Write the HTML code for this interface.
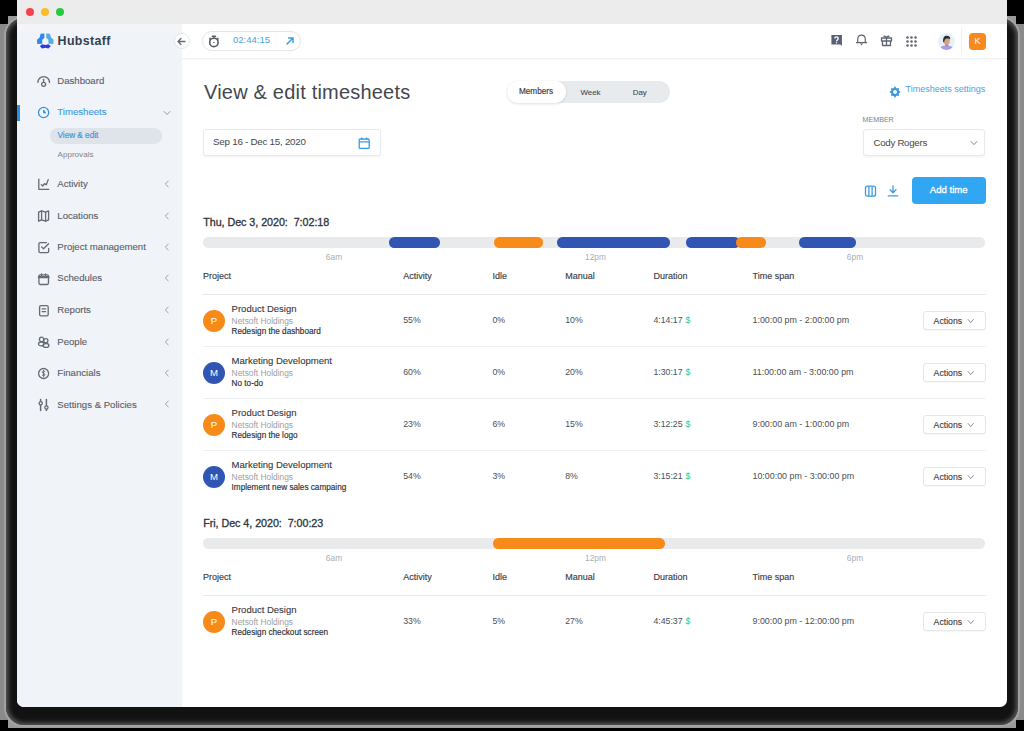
<!DOCTYPE html>
<html><head><meta charset="utf-8">
<style>
*{box-sizing:border-box;margin:0;padding:0}
html,body{width:1024px;height:731px;overflow:hidden;background:#000;font-family:"Liberation Sans",sans-serif;position:relative}
.a{position:absolute}
.t{position:absolute;white-space:nowrap;line-height:1}
#g1{position:absolute;left:0;top:24px;width:1024px;height:696px;background:#8a8a8a}
#g2{position:absolute;left:8px;top:16px;width:1008px;height:712px;background:#9a9a9a}
#sh{position:absolute;left:6px;top:18px;width:1012px;height:707px;border-radius:18px;background:#121212;box-shadow:0 0 1px 1.5px rgba(165,165,165,0.9), inset 0 0 5px 2px rgba(100,100,100,0.95)}
#win{position:absolute;left:17px;top:0;width:990px;height:707px;background:#fff;border-radius:0 0 7px 7px;overflow:hidden}
#title{position:absolute;left:0;top:0;width:990px;height:24px;background:#ececec}
.tl{position:absolute;top:8px;width:8.4px;height:8.4px;border-radius:50%}
#side{position:absolute;left:0;top:24px;width:165px;height:683px;background:linear-gradient(#f3f5f9 0,#f3f5f9 6px,#f0f3f8 10px)}
#hdr{position:absolute;left:165px;top:24px;width:825px;height:35px;background:#fff;border-bottom:1px solid #f1f2f3;box-shadow:0 1px 1px rgba(0,0,0,0.02)}
</style></head><body>
<div id="g1"></div><div id="g2"></div><div id="sh"></div>
<div id="win">
  <div id="title">
    <div class="tl" style="left:8.8px;background:#f8414c"></div>
    <div class="tl" style="left:23.7px;background:#fbbc2a"></div>
    <div class="tl" style="left:38.8px;background:#28c93f"></div>
  </div>
  <div id="side"></div>
  <div id="hdr"></div>
</div>
<svg class="a" style="left:35px;top:33px" width="21" height="17" viewBox="0 0 21 17">
<path d="M5.6 0.8 L9.4 0.6 L9.4 4.8 L7.2 7 L7.2 10.8 L2.2 11 L2 6.8 L4.6 4.6 Z" fill="#2f8ae8"/>
<path d="M15 0.8 L11.2 0.6 L11.2 4.8 L13.4 7 L13.4 10.8 L18.4 11 L18.6 6.8 L16 4.6 Z" fill="#55aee8"/>
<path d="M4.8 13.3 L7.2 11.2 L10.3 12 L13.4 11.2 L15.8 13.3 L13.4 15.5 L10.3 14.7 L7.2 15.5 Z" fill="#2a3ee0"/>
</svg>
<div class="t" style="left:57.60px;top:34.90px;font-size:12.4px;color:#34414f;font-weight:700;letter-spacing:0.35px;">Hubstaff</div>
<div class="t" style="left:57.30px;top:76.07px;font-size:9.6px;color:#5b616b;-webkit-text-stroke:0.12px #5b616b;">Dashboard</div>
<div class="t" style="left:57.30px;top:107.27px;font-size:9.6px;color:#3d9be0;-webkit-text-stroke:0.12px #3d9be0;">Timesheets</div>
<div class="t" style="left:57.30px;top:179.17px;font-size:9.6px;color:#5b616b;-webkit-text-stroke:0.12px #5b616b;">Activity</div>
<div class="t" style="left:57.30px;top:210.67px;font-size:9.6px;color:#5b616b;-webkit-text-stroke:0.12px #5b616b;">Locations</div>
<div class="t" style="left:57.30px;top:242.17px;font-size:9.6px;color:#5b616b;-webkit-text-stroke:0.12px #5b616b;">Project management</div>
<div class="t" style="left:57.30px;top:273.47px;font-size:9.6px;color:#5b616b;-webkit-text-stroke:0.12px #5b616b;">Schedules</div>
<div class="t" style="left:57.30px;top:304.97px;font-size:9.6px;color:#5b616b;-webkit-text-stroke:0.12px #5b616b;">Reports</div>
<div class="t" style="left:57.30px;top:336.67px;font-size:9.6px;color:#5b616b;-webkit-text-stroke:0.12px #5b616b;">People</div>
<div class="t" style="left:57.30px;top:368.17px;font-size:9.6px;color:#5b616b;-webkit-text-stroke:0.12px #5b616b;">Financials</div>
<div class="t" style="left:57.30px;top:399.57px;font-size:9.6px;color:#5b616b;-webkit-text-stroke:0.12px #5b616b;">Settings &amp; Policies</div>
<div class="a" style="left:17px;top:105px;width:3px;height:16px;background:#2f8fe0"></div>
<svg class="a" style="left:164px;top:180.0px" width="6" height="8" viewBox="0 0 6 8"><path d="M4.5 0.8 L1.3 4 L4.5 7.2" fill="none" stroke="#9aa0a8" stroke-width="1"/></svg>
<svg class="a" style="left:164px;top:211.5px" width="6" height="8" viewBox="0 0 6 8"><path d="M4.5 0.8 L1.3 4 L4.5 7.2" fill="none" stroke="#9aa0a8" stroke-width="1"/></svg>
<svg class="a" style="left:164px;top:243.0px" width="6" height="8" viewBox="0 0 6 8"><path d="M4.5 0.8 L1.3 4 L4.5 7.2" fill="none" stroke="#9aa0a8" stroke-width="1"/></svg>
<svg class="a" style="left:164px;top:274.3px" width="6" height="8" viewBox="0 0 6 8"><path d="M4.5 0.8 L1.3 4 L4.5 7.2" fill="none" stroke="#9aa0a8" stroke-width="1"/></svg>
<svg class="a" style="left:164px;top:305.8px" width="6" height="8" viewBox="0 0 6 8"><path d="M4.5 0.8 L1.3 4 L4.5 7.2" fill="none" stroke="#9aa0a8" stroke-width="1"/></svg>
<svg class="a" style="left:164px;top:337.5px" width="6" height="8" viewBox="0 0 6 8"><path d="M4.5 0.8 L1.3 4 L4.5 7.2" fill="none" stroke="#9aa0a8" stroke-width="1"/></svg>
<svg class="a" style="left:164px;top:369.0px" width="6" height="8" viewBox="0 0 6 8"><path d="M4.5 0.8 L1.3 4 L4.5 7.2" fill="none" stroke="#9aa0a8" stroke-width="1"/></svg>
<svg class="a" style="left:164px;top:400.4px" width="6" height="8" viewBox="0 0 6 8"><path d="M4.5 0.8 L1.3 4 L4.5 7.2" fill="none" stroke="#9aa0a8" stroke-width="1"/></svg>
<svg class="a" style="left:163.0px;top:109.5px" width="8" height="6" viewBox="0 0 8 6"><path d="M0.8 1.2 L4.0 4.6 L7.2 1.2" fill="none" stroke="#9aa0a8" stroke-width="1"/></svg>
<div class="a" style="left:50px;top:128px;width:112px;height:16px;background:#dfe3ea;border-radius:8px"></div>
<div class="t" style="left:57.50px;top:131.86px;font-size:8.2px;color:#3d9be0;-webkit-text-stroke:0.2px #3d9be0;">View &amp; edit</div>
<div class="t" style="left:57.50px;top:150.74px;font-size:8.1px;color:#80868f;">Approvals</div>
<svg class="a" style="left:37px;top:75px" width="14" height="13" viewBox="0 0 14 13" fill="none" stroke="#646b75" stroke-width="1.3" stroke-linecap="round" stroke-linejoin="round"><path d="M0.9 7.4 A5.8 5.8 0 0 1 12.5 7.4"/><line x1="6.6" y1="4.3" x2="6.6" y2="7.3"/><circle cx="6.6" cy="9.3" r="2"/></svg>
<svg class="a" style="left:37px;top:106.3px" width="13" height="13" viewBox="0 0 13 13" fill="none" stroke="#3a92d6" stroke-width="1.3" stroke-linejoin="round"><circle cx="6.6" cy="6.5" r="5.1"/><path d="M6.6 4 V6.9 H8.6 Z" fill="#3a92d6" stroke-width="1"/></svg>
<svg class="a" style="left:37px;top:178px" width="13" height="13" viewBox="0 0 13 13" fill="none" stroke="#646b75" stroke-width="1.3" stroke-linecap="round" stroke-linejoin="round"><path d="M1.8 1.2 V11.3 H11.8"/><path d="M4.3 6.6 L5.7 8 L7.5 5.6 L9.3 6.8 L11.2 1.6"/></svg>
<svg class="a" style="left:37px;top:209px" width="13" height="14" viewBox="0 0 13 14" fill="none" stroke="#646b75" stroke-width="1.3" stroke-linecap="round" stroke-linejoin="round"><path d="M1.6 3.2 L4.6 1.9 L8.6 3.2 L11.6 1.9 V10.9 L8.6 12.2 L4.6 10.9 L1.6 12.2 Z"/><path d="M4.6 1.9 V10.9 M8.6 3.2 V12.2"/></svg>
<svg class="a" style="left:37px;top:241px" width="13" height="13" viewBox="0 0 13 13" fill="none" stroke="#646b75" stroke-width="1.3" stroke-linecap="round" stroke-linejoin="round"><path d="M9.4 1.6 H3.2 Q1.9 1.6 1.9 2.9 V10.3 Q1.9 11.6 3.2 11.6 H10.4 Q11.7 11.6 11.7 10.3 V7.4"/><path d="M4.6 5.9 L6.5 7.7 L11.6 2.7"/></svg>
<svg class="a" style="left:37px;top:273px" width="13" height="13" viewBox="0 0 13 13" fill="none" stroke="#646b75" stroke-width="1.3" stroke-linecap="round" stroke-linejoin="round"><rect x="1.9" y="1.9" width="9.6" height="9.6" rx="1.4"/><path d="M1.9 4.2 H11.5" stroke-width="2.2"/><path d="M4.6 1 V2.4 M8.6 1 V2.4"/></svg>
<svg class="a" style="left:37px;top:304px" width="13" height="13" viewBox="0 0 13 13" fill="none" stroke="#646b75" stroke-width="1.3" stroke-linecap="round" stroke-linejoin="round"><rect x="2.6" y="1.6" width="8.6" height="10.2" rx="1.4"/><path d="M5.2 4.9 H8.6 M5.2 7.6 H8.6"/></svg>
<svg class="a" style="left:37px;top:335px" width="13" height="13" viewBox="0 0 13 13" fill="none" stroke="#646b75" stroke-width="1.3" stroke-linecap="round" stroke-linejoin="round"><circle cx="4.6" cy="4.4" r="2.2"/><circle cx="8.8" cy="5.8" r="2.1"/><ellipse cx="4.2" cy="8.9" rx="2.7" ry="1.9"/><ellipse cx="9" cy="10.4" rx="2.9" ry="1.9"/></svg>
<svg class="a" style="left:37px;top:367px" width="13" height="13" viewBox="0 0 13 13" fill="none" stroke="#646b75" stroke-width="1.3" stroke-linecap="round" stroke-linejoin="round"><circle cx="6.6" cy="6.5" r="5"/><path d="M7.9 4.6 C7.5 4 5.3 4 5.3 5.3 C5.3 6.5 8 6.2 8 7.6 C8 8.9 5.6 8.8 5.2 8.2 M6.6 3.4 V9.6" stroke-width="1"/></svg>
<svg class="a" style="left:37px;top:398px" width="13" height="14" viewBox="0 0 13 14" fill="none" stroke="#646b75" stroke-width="1.3" stroke-linecap="round" stroke-linejoin="round"><path d="M3.6 1.6 V12.6 M9.4 1.6 V12.6" stroke-width="1.5"/><circle cx="3.7" cy="5.3" r="1.6" fill="#f0f3f8"/><circle cx="9.4" cy="9.5" r="1.6" fill="#f0f3f8"/></svg>
<div class="a" style="left:173.5px;top:33px;width:16px;height:16px;background:#fff;border:1px solid #e4e7eb;border-radius:50%"></div>
<svg class="a" style="left:176px;top:36px" width="11" height="11" viewBox="0 0 11 11" fill="none" stroke="#646a72" stroke-width="1.3" stroke-linecap="round" stroke-linejoin="round"><path d="M9 5.5 H2.2 M5 2.5 L2 5.5 L5 8.5"/></svg>
<div class="a" style="left:202px;top:31px;width:99px;height:20px;background:#fff;border:1px solid #e2e5e9;border-radius:10px"></div>
<svg class="a" style="left:207px;top:34px" width="14" height="14" viewBox="0 0 14 14" fill="none" stroke="#585e66" stroke-width="1.6" stroke-linecap="round"><circle cx="6.9" cy="8.4" r="4.2"/><path d="M5.3 2.2 H8.6 M6.9 2.4 V4" stroke-width="1.4"/><path d="M2.6 5 L3.4 4.2 M11.2 5 L10.4 4.2" stroke-width="1.2"/><circle cx="6.9" cy="8.4" r="0.7" fill="#585e66" stroke="none"/></svg>
<div class="t" style="left:233.00px;top:35.26px;font-size:9.5px;color:#4aa3df;">02:44:15</div>
<svg class="a" style="left:285px;top:36px" width="10" height="10" viewBox="0 0 10 10" fill="none" stroke="#3d9be0" stroke-width="1.5" stroke-linecap="round"><path d="M2 8 L8 2 M3.6 2 H8 V6.4"/></svg>
<svg class="a" style="left:831px;top:35px" width="12" height="12" viewBox="0 0 12 12"><path d="M0.4 0.1 H10.9 V10.9 L9.4 9.4 H0.4 Z" fill="#566075"/><path d="M3.8 3.6 Q3.8 1.9 5.5 1.9 Q7.2 1.9 7.2 3.5 Q7.2 4.5 6.2 5.1 Q5.5 5.5 5.5 6.3" fill="none" stroke="#fff" stroke-width="1.3"/><circle cx="5.5" cy="7.7" r="0.75" fill="#fff"/></svg>
<svg class="a" style="left:855px;top:34px" width="13" height="13" viewBox="0 0 13 13" fill="none" stroke="#60666f" stroke-width="1.2"><path d="M2.7 8.6 V5.4 Q2.7 1.2 6.5 1.2 Q10.3 1.2 10.3 5.4 V8.6"/><path d="M1 8.6 H12" stroke-width="1.3"/><path d="M4.9 9.5 H8.1 L6.5 11.6 Z" fill="#60666f" stroke="none"/></svg>
<svg class="a" style="left:880px;top:34px" width="13" height="13" viewBox="0 0 13 13" fill="none" stroke="#5f6673" stroke-width="1.3" stroke-linejoin="round"><rect x="1.5" y="4" width="10" height="3"/><path d="M2.5 7 V11.5 H10.5 V7 M6.5 4 V11.5"/><path d="M6.5 4 C5.5 2 4 1.6 4 3 M6.5 4 C7.5 2 9 1.6 9 3"/></svg>
<svg class="a" style="left:905.5px;top:35.5px" width="11" height="11" viewBox="0 0 11 11" fill="#5f6673"><circle cx="1.5" cy="1.5" r="1.3"/><circle cx="1.5" cy="5.5" r="1.3"/><circle cx="1.5" cy="9.5" r="1.3"/><circle cx="5.5" cy="1.5" r="1.3"/><circle cx="5.5" cy="5.5" r="1.3"/><circle cx="5.5" cy="9.5" r="1.3"/><circle cx="9.5" cy="1.5" r="1.3"/><circle cx="9.5" cy="5.5" r="1.3"/><circle cx="9.5" cy="9.5" r="1.3"/></svg>
<svg class="a" style="left:937.5px;top:33px" width="17" height="17" viewBox="0 0 17 17"><defs><clipPath id="cav"><circle cx="8.5" cy="8.5" r="8.5"/></clipPath></defs>
<g clip-path="url(#cav)"><rect width="17" height="17" fill="#e6f0f8"/>
<path d="M1.5 17 C2.5 13 5.5 12.6 8.6 12.6 C11.6 12.6 14.5 13 15.5 17 Z" fill="#ad9be6"/>
<rect x="7.2" y="10.6" width="3" height="2.6" fill="#b88a70"/>
<ellipse cx="8.7" cy="8" rx="3.1" ry="3.7" fill="#d0a68a"/>
<path d="M5.3 9.2 C4.6 4.6 6.4 2.8 8.8 2.8 C11.2 2.8 12.6 4.2 12.2 6.6 C11.4 5.6 10.2 5.4 8.6 5.6 C7.2 5.8 6.4 6.6 6.2 9.6 Z" fill="#2e2a2c"/></g></svg>
<div class="a" style="left:961px;top:28px;width:1px;height:27px;background:#eef0f3"></div>
<div class="a" style="left:968.8px;top:32.8px;width:17.2px;height:17.2px;background:#f7891e;border-radius:4px"></div>
<div class="t" style="left:977.40px;top:37.38px;font-size:9px;color:#fff;transform:translateX(-50%);">K</div>
<div class="t" style="left:204.00px;top:81.87px;font-size:20px;color:#44484e;letter-spacing:0.2px;">View &amp; edit timesheets</div>
<div class="a" style="left:507px;top:81px;width:163px;height:21.5px;background:#e8ebee;border-radius:11px"></div>
<div class="a" style="left:507px;top:80.5px;width:58.5px;height:22.5px;background:#fff;border-radius:11px;box-shadow:0 1px 3px rgba(0,0,0,0.12)"></div>
<div class="t" style="left:519.00px;top:88.26px;font-size:8.2px;color:#33383f;-webkit-text-stroke:0.15px #33383f;">Members</div>
<div class="t" style="left:580.50px;top:88.51px;font-size:7.9px;color:#464c54;-webkit-text-stroke:0.1px #464c54;">Week</div>
<div class="t" style="left:632.70px;top:88.51px;font-size:7.9px;color:#464c54;-webkit-text-stroke:0.1px #464c54;">Day</div>
<svg class="a" style="left:888.1px;top:84.85px" width="14" height="14" viewBox="0 0 14 14" fill="none" stroke="#3597dc"><circle cx="7" cy="7" r="3.05" stroke-width="2.1"/><g stroke-width="1.7"><line x1="10.40" y1="7.00" x2="12.20" y2="7.00"/><line x1="9.40" y1="9.40" x2="10.68" y2="10.68"/><line x1="7.00" y1="10.40" x2="7.00" y2="12.20"/><line x1="4.60" y1="9.40" x2="3.32" y2="10.68"/><line x1="3.60" y1="7.00" x2="1.80" y2="7.00"/><line x1="4.60" y1="4.60" x2="3.32" y2="3.32"/><line x1="7.00" y1="3.60" x2="7.00" y2="1.80"/><line x1="9.40" y1="4.60" x2="10.68" y2="3.32"/></g></svg>
<div class="t" style="left:905.50px;top:84.78px;font-size:9px;color:#4aa3df;">Timesheets settings</div>
<div class="a" style="left:202.5px;top:129px;width:178px;height:27.3px;background:#fff;border:1px solid #e8eaed;border-radius:3px;box-shadow:0 1px 2px rgba(0,0,0,0.05)"></div>
<div class="t" style="left:213.10px;top:137.30px;font-size:9.8px;color:#44494f;letter-spacing:-0.26px;">Sep 16 - Dec 15, 2020</div>
<svg class="a" style="left:357.5px;top:136.5px" width="12.5" height="12.5" viewBox="0 0 12.5 12.5" fill="none" stroke="#3d9be0" stroke-width="1.3"><rect x="1.2" y="2" width="10" height="9.4" rx="1"/><path d="M1.2 4.8 H11.2 M3.8 0.6 V2.6 M8.6 0.6 V2.6"/></svg>
<div class="t" style="left:862.60px;top:117.39px;font-size:7.1px;color:#7d828a;">MEMBER</div>
<div class="a" style="left:862.6px;top:129.2px;width:122.8px;height:26.8px;background:#fff;border:1px solid #e8eaed;border-radius:3px;box-shadow:0 1px 2px rgba(0,0,0,0.05)"></div>
<div class="t" style="left:873.50px;top:137.59px;font-size:9.7px;color:#43474d;letter-spacing:-0.28px;">Cody Rogers</div>
<svg class="a" style="left:969.8px;top:139.6px" width="8" height="6" viewBox="0 0 8 6"><path d="M0.8 1.2 L4.0 4.6 L7.2 1.2" fill="none" stroke="#80868f" stroke-width="1"/></svg>
<svg class="a" style="left:864px;top:184.5px" width="12.5" height="12.5" viewBox="0 0 12.5 12.5" fill="none" stroke="#3d9be0" stroke-width="1.3"><rect x="1.5" y="1.2" width="10" height="10" rx="2"/><path d="M4.9 1.2 V11.2 M8.1 1.2 V11.2"/></svg>
<svg class="a" style="left:886.5px;top:184.5px" width="12" height="12" viewBox="0 0 12 12" fill="none" stroke="#3d9be0" stroke-width="1.3" stroke-linecap="round" stroke-linejoin="round"><path d="M6 1 V7.4 M3 4.8 L6 7.8 L9 4.8 M1.2 10.8 H10.8"/></svg>
<div class="a" style="left:912px;top:177.1px;width:73.6px;height:27.1px;background:#31a6f3;border-radius:4px"></div>
<div class="t" style="left:929.80px;top:185.37px;font-size:9.6px;color:#fff;-webkit-text-stroke:0.3px #fff;">Add time</div>
<div class="t" style="left:203.20px;top:217.30px;font-size:10.75px;color:#2f3339;letter-spacing:-0.05px;-webkit-text-stroke:0.3px #2f3339;">Thu, Dec 3, 2020:&nbsp; 7:02:18</div>
<div class="a" style="left:203px;top:237.4px;width:782px;height:10.6px;background:#e9eaeb;border-radius:5.3px"></div>
<div class="a" style="left:388.8px;top:237.4px;width:50.80000000000001px;height:10.6px;background:#3155b3;border-radius:5.3px"></div>
<div class="a" style="left:493.7px;top:237.4px;width:49.00000000000006px;height:10.6px;background:#f88a1a;border-radius:5.3px"></div>
<div class="a" style="left:556.8px;top:237.4px;width:113.5px;height:10.6px;background:#3155b3;border-radius:5.3px"></div>
<div class="a" style="left:685.8px;top:237.4px;width:54.200000000000045px;height:10.6px;background:#3155b3;border-radius:5.3px"></div>
<div class="a" style="left:735.5px;top:237.4px;width:30.200000000000045px;height:10.6px;background:#f88a1a;border-radius:5.3px"></div>
<div class="a" style="left:799.2px;top:237.4px;width:56.69999999999993px;height:10.6px;background:#3155b3;border-radius:5.3px"></div>
<div class="t" style="left:334.00px;top:253.39px;font-size:8.4px;color:#a9aeb4;transform:translateX(-50%);">6am</div>
<div class="t" style="left:595.50px;top:253.39px;font-size:8.4px;color:#a9aeb4;transform:translateX(-50%);">12pm</div>
<div class="t" style="left:855.00px;top:253.39px;font-size:8.4px;color:#a9aeb4;transform:translateX(-50%);">6pm</div>
<div class="t" style="left:203.00px;top:272.18px;font-size:9px;color:#3b4047;-webkit-text-stroke:0.15px #3b4047;">Project</div>
<div class="t" style="left:403.20px;top:272.18px;font-size:9px;color:#3b4047;-webkit-text-stroke:0.15px #3b4047;">Activity</div>
<div class="t" style="left:492.50px;top:272.18px;font-size:9px;color:#3b4047;-webkit-text-stroke:0.15px #3b4047;">Idle</div>
<div class="t" style="left:565.20px;top:272.18px;font-size:9px;color:#3b4047;-webkit-text-stroke:0.15px #3b4047;">Manual</div>
<div class="t" style="left:653.50px;top:272.18px;font-size:9px;color:#3b4047;-webkit-text-stroke:0.15px #3b4047;">Duration</div>
<div class="t" style="left:752.50px;top:272.18px;font-size:9px;color:#3b4047;-webkit-text-stroke:0.15px #3b4047;">Time span</div>
<div class="a" style="left:203px;top:294px;width:783px;height:1.2px;background:#e8eaed"></div>
<div class="a" style="left:202.7px;top:309.5px;width:22.2px;height:22.2px;background:#f88a1a;border-radius:50%"></div>
<div class="t" style="left:214.00px;top:315.77px;font-size:9.6px;color:#fff;transform:translateX(-50%);">P</div>
<div class="t" style="left:231.60px;top:303.96px;font-size:9.5px;color:#33373d;-webkit-text-stroke:0.1px #33373d;">Product Design</div>
<div class="t" style="left:231.60px;top:316.79px;font-size:8.4px;color:#9aa0a6;">Netsoft Holdings</div>
<div class="t" style="left:231.60px;top:328.06px;font-size:8.2px;color:#2c3035;-webkit-text-stroke:0.15px #2c3035;">Redesign the dashboard</div>
<div class="t" style="left:403.20px;top:315.79px;font-size:8.75px;color:#4a4f56;">55%</div>
<div class="t" style="left:492.50px;top:315.79px;font-size:8.75px;color:#4a4f56;">0%</div>
<div class="t" style="left:565.20px;top:315.79px;font-size:8.75px;color:#4a4f56;">10%</div>
<div class="t" style="left:653.40px;top:315.79px;font-size:8.75px;color:#4a4f56;">4:14:17<span style="color:#3cc47c;margin-left:3px">$</span></div>
<div class="t" style="left:752.50px;top:315.67px;font-size:8.9px;color:#4a4f56;">1:00:00 pm - 2:00:00 pm</div>
<div class="a" style="left:922.5px;top:310.6px;width:63.2px;height:19.6px;background:#fff;border:1px solid #e4e6ea;border-radius:3px;box-shadow:0 1px 1px rgba(0,0,0,0.03)"></div>
<div class="t" style="left:933.60px;top:316.84px;font-size:8.7px;color:#33373d;-webkit-text-stroke:0.1px #33373d;">Actions</div>
<svg class="a" style="left:967.25px;top:318px" width="7.5" height="6" viewBox="0 0 7.5 6"><path d="M0.8 1.2 L3.75 4.6 L6.7 1.2" fill="none" stroke="#80868f" stroke-width="0.9"/></svg>
<div class="a" style="left:203px;top:346px;width:783px;height:1px;background:#eef0f2"></div>
<div class="a" style="left:202.7px;top:361.5px;width:22.2px;height:22.2px;background:#3155b3;border-radius:50%"></div>
<div class="t" style="left:214.00px;top:367.77px;font-size:9.6px;color:#fff;transform:translateX(-50%);">M</div>
<div class="t" style="left:231.60px;top:355.96px;font-size:9.5px;color:#33373d;-webkit-text-stroke:0.1px #33373d;">Marketing Development</div>
<div class="t" style="left:231.60px;top:368.79px;font-size:8.4px;color:#9aa0a6;">Netsoft Holdings</div>
<div class="t" style="left:231.60px;top:380.06px;font-size:8.2px;color:#2c3035;-webkit-text-stroke:0.15px #2c3035;">No to-do</div>
<div class="t" style="left:403.20px;top:367.79px;font-size:8.75px;color:#4a4f56;">60%</div>
<div class="t" style="left:492.50px;top:367.79px;font-size:8.75px;color:#4a4f56;">0%</div>
<div class="t" style="left:565.20px;top:367.79px;font-size:8.75px;color:#4a4f56;">20%</div>
<div class="t" style="left:653.40px;top:367.79px;font-size:8.75px;color:#4a4f56;">1:30:17<span style="color:#3cc47c;margin-left:3px">$</span></div>
<div class="t" style="left:752.50px;top:367.67px;font-size:8.9px;color:#4a4f56;">11:00:00 am - 3:00:00 pm</div>
<div class="a" style="left:922.5px;top:362.6px;width:63.2px;height:19.6px;background:#fff;border:1px solid #e4e6ea;border-radius:3px;box-shadow:0 1px 1px rgba(0,0,0,0.03)"></div>
<div class="t" style="left:933.60px;top:368.84px;font-size:8.7px;color:#33373d;-webkit-text-stroke:0.1px #33373d;">Actions</div>
<svg class="a" style="left:967.25px;top:370px" width="7.5" height="6" viewBox="0 0 7.5 6"><path d="M0.8 1.2 L3.75 4.6 L6.7 1.2" fill="none" stroke="#80868f" stroke-width="0.9"/></svg>
<div class="a" style="left:203px;top:398px;width:783px;height:1px;background:#eef0f2"></div>
<div class="a" style="left:202.7px;top:413.5px;width:22.2px;height:22.2px;background:#f88a1a;border-radius:50%"></div>
<div class="t" style="left:214.00px;top:419.77px;font-size:9.6px;color:#fff;transform:translateX(-50%);">P</div>
<div class="t" style="left:231.60px;top:407.96px;font-size:9.5px;color:#33373d;-webkit-text-stroke:0.1px #33373d;">Product Design</div>
<div class="t" style="left:231.60px;top:420.79px;font-size:8.4px;color:#9aa0a6;">Netsoft Holdings</div>
<div class="t" style="left:231.60px;top:432.06px;font-size:8.2px;color:#2c3035;-webkit-text-stroke:0.15px #2c3035;">Redesign the logo</div>
<div class="t" style="left:403.20px;top:419.79px;font-size:8.75px;color:#4a4f56;">23%</div>
<div class="t" style="left:492.50px;top:419.79px;font-size:8.75px;color:#4a4f56;">6%</div>
<div class="t" style="left:565.20px;top:419.79px;font-size:8.75px;color:#4a4f56;">15%</div>
<div class="t" style="left:653.40px;top:419.79px;font-size:8.75px;color:#4a4f56;">3:12:25<span style="color:#3cc47c;margin-left:3px">$</span></div>
<div class="t" style="left:752.50px;top:419.67px;font-size:8.9px;color:#4a4f56;">9:00:00 am - 1:00:00 pm</div>
<div class="a" style="left:922.5px;top:414.6px;width:63.2px;height:19.6px;background:#fff;border:1px solid #e4e6ea;border-radius:3px;box-shadow:0 1px 1px rgba(0,0,0,0.03)"></div>
<div class="t" style="left:933.60px;top:420.84px;font-size:8.7px;color:#33373d;-webkit-text-stroke:0.1px #33373d;">Actions</div>
<svg class="a" style="left:967.25px;top:422px" width="7.5" height="6" viewBox="0 0 7.5 6"><path d="M0.8 1.2 L3.75 4.6 L6.7 1.2" fill="none" stroke="#80868f" stroke-width="0.9"/></svg>
<div class="a" style="left:203px;top:450px;width:783px;height:1px;background:#eef0f2"></div>
<div class="a" style="left:202.7px;top:465.5px;width:22.2px;height:22.2px;background:#3155b3;border-radius:50%"></div>
<div class="t" style="left:214.00px;top:471.77px;font-size:9.6px;color:#fff;transform:translateX(-50%);">M</div>
<div class="t" style="left:231.60px;top:459.96px;font-size:9.5px;color:#33373d;-webkit-text-stroke:0.1px #33373d;">Marketing Development</div>
<div class="t" style="left:231.60px;top:472.79px;font-size:8.4px;color:#9aa0a6;">Netsoft Holdings</div>
<div class="t" style="left:231.60px;top:484.06px;font-size:8.2px;color:#2c3035;-webkit-text-stroke:0.15px #2c3035;">Implement new sales campaing</div>
<div class="t" style="left:403.20px;top:471.79px;font-size:8.75px;color:#4a4f56;">54%</div>
<div class="t" style="left:492.50px;top:471.79px;font-size:8.75px;color:#4a4f56;">3%</div>
<div class="t" style="left:565.20px;top:471.79px;font-size:8.75px;color:#4a4f56;">8%</div>
<div class="t" style="left:653.40px;top:471.79px;font-size:8.75px;color:#4a4f56;">3:15:21<span style="color:#3cc47c;margin-left:3px">$</span></div>
<div class="t" style="left:752.50px;top:471.67px;font-size:8.9px;color:#4a4f56;">10:00:00 pm - 3:00:00 pm</div>
<div class="a" style="left:922.5px;top:466.6px;width:63.2px;height:19.6px;background:#fff;border:1px solid #e4e6ea;border-radius:3px;box-shadow:0 1px 1px rgba(0,0,0,0.03)"></div>
<div class="t" style="left:933.60px;top:472.84px;font-size:8.7px;color:#33373d;-webkit-text-stroke:0.1px #33373d;">Actions</div>
<svg class="a" style="left:967.25px;top:474px" width="7.5" height="6" viewBox="0 0 7.5 6"><path d="M0.8 1.2 L3.75 4.6 L6.7 1.2" fill="none" stroke="#80868f" stroke-width="0.9"/></svg>
<div class="t" style="left:203.20px;top:518.30px;font-size:10.75px;color:#2f3339;letter-spacing:-0.05px;-webkit-text-stroke:0.3px #2f3339;">Fri, Dec 4, 2020:&nbsp; 7:00:23</div>
<div class="a" style="left:203px;top:538.4px;width:782px;height:10.6px;background:#e9eaeb;border-radius:5.3px"></div>
<div class="a" style="left:493.3px;top:538.4px;width:172.2px;height:10.6px;background:#f88a1a;border-radius:5.3px"></div>
<div class="t" style="left:334.00px;top:554.39px;font-size:8.4px;color:#a9aeb4;transform:translateX(-50%);">6am</div>
<div class="t" style="left:595.50px;top:554.39px;font-size:8.4px;color:#a9aeb4;transform:translateX(-50%);">12pm</div>
<div class="t" style="left:855.00px;top:554.39px;font-size:8.4px;color:#a9aeb4;transform:translateX(-50%);">6pm</div>
<div class="t" style="left:203.00px;top:573.18px;font-size:9px;color:#3b4047;-webkit-text-stroke:0.15px #3b4047;">Project</div>
<div class="t" style="left:403.20px;top:573.18px;font-size:9px;color:#3b4047;-webkit-text-stroke:0.15px #3b4047;">Activity</div>
<div class="t" style="left:492.50px;top:573.18px;font-size:9px;color:#3b4047;-webkit-text-stroke:0.15px #3b4047;">Idle</div>
<div class="t" style="left:565.20px;top:573.18px;font-size:9px;color:#3b4047;-webkit-text-stroke:0.15px #3b4047;">Manual</div>
<div class="t" style="left:653.50px;top:573.18px;font-size:9px;color:#3b4047;-webkit-text-stroke:0.15px #3b4047;">Duration</div>
<div class="t" style="left:752.50px;top:573.18px;font-size:9px;color:#3b4047;-webkit-text-stroke:0.15px #3b4047;">Time span</div>
<div class="a" style="left:203px;top:595px;width:783px;height:1.2px;background:#e8eaed"></div>
<div class="a" style="left:202.7px;top:610.5px;width:22.2px;height:22.2px;background:#f88a1a;border-radius:50%"></div>
<div class="t" style="left:214.00px;top:616.77px;font-size:9.6px;color:#fff;transform:translateX(-50%);">P</div>
<div class="t" style="left:231.60px;top:604.96px;font-size:9.5px;color:#33373d;-webkit-text-stroke:0.1px #33373d;">Product Design</div>
<div class="t" style="left:231.60px;top:617.79px;font-size:8.4px;color:#9aa0a6;">Netsoft Holdings</div>
<div class="t" style="left:231.60px;top:629.06px;font-size:8.2px;color:#2c3035;-webkit-text-stroke:0.15px #2c3035;">Redesign checkout screen</div>
<div class="t" style="left:403.20px;top:616.79px;font-size:8.75px;color:#4a4f56;">33%</div>
<div class="t" style="left:492.50px;top:616.79px;font-size:8.75px;color:#4a4f56;">5%</div>
<div class="t" style="left:565.20px;top:616.79px;font-size:8.75px;color:#4a4f56;">27%</div>
<div class="t" style="left:653.40px;top:616.79px;font-size:8.75px;color:#4a4f56;">4:45:37<span style="color:#3cc47c;margin-left:3px">$</span></div>
<div class="t" style="left:752.50px;top:616.67px;font-size:8.9px;color:#4a4f56;">9:00:00 pm - 12:00:00 pm</div>
<div class="a" style="left:922.5px;top:611.6px;width:63.2px;height:19.6px;background:#fff;border:1px solid #e4e6ea;border-radius:3px;box-shadow:0 1px 1px rgba(0,0,0,0.03)"></div>
<div class="t" style="left:933.60px;top:617.84px;font-size:8.7px;color:#33373d;-webkit-text-stroke:0.1px #33373d;">Actions</div>
<svg class="a" style="left:967.25px;top:619px" width="7.5" height="6" viewBox="0 0 7.5 6"><path d="M0.8 1.2 L3.75 4.6 L6.7 1.2" fill="none" stroke="#80868f" stroke-width="0.9"/></svg>
</body></html>
